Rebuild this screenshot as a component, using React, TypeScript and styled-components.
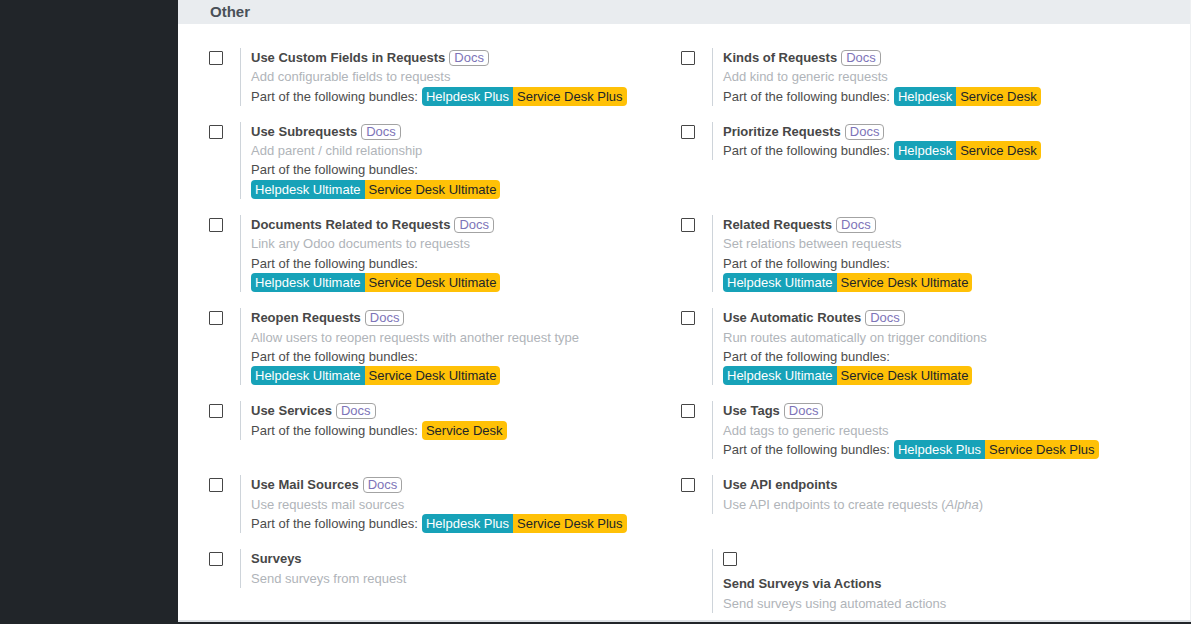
import React from "react";
import styled, { createGlobalStyle } from "styled-components";

const GlobalStyle = createGlobalStyle`
  html, body { margin: 0; padding: 0; }
  body {
    font-family: "Liberation Sans", Arial, sans-serif;
    font-size: 13px;
    color: #4c4c4c;
    background: #212529;
    overflow: hidden;
  }
  * { box-sizing: border-box; }
`;

const Page = styled.div`
  display: flex;
  height: 624px;
  background: #212529;
`;

const Sidebar = styled.aside`
  flex: 0 0 178px;
  background: #212529;
`;

const Main = styled.main`
  flex: 1;
  align-self: flex-start;
  height: 622px;
  background: #ffffff;
  border-bottom: 2px solid #dee2e6;
  border-right: 1px solid #eef0f2;
  overflow: hidden;
`;

const SectionHeader = styled.h2`
  margin: 0;
  height: 24px;
  padding-left: 32px;
  background: #e9ecef;
  font-size: 15px;
  line-height: 24px;
  font-weight: 700;
  color: #495057;
`;

const SettingsGrid = styled.div`
  display: grid;
  grid-template-columns: 472px 472px;
  row-gap: 16px;
  padding: 24px 0 0 31px;
  align-items: start;
`;

const SettingBox = styled.div`
  display: flex;
`;

const LeftPane = styled.div`
  flex: 0 0 31px;
`;

const Checkbox = styled.span`
  display: block;
  width: 14px;
  height: 14px;
  margin-top: 3px;
  border: 1px solid #464646;
  border-radius: 1px;
  background: #fff;
`;

const CheckRow = styled.div`
  height: 22px;
`;

const RightPane = styled.div`
  flex: 1;
  border-left: 1px solid #ced4da;
  padding-left: 10px;
  line-height: 19.3px;
`;

const Title = styled.div`
  font-weight: 700;
  color: #474747;
  display: flex;
  align-items: center;
  height: 19.3px;
`;

const DocsLink = styled.span`
  display: inline-block;
  margin-left: 4px;
  padding: 0 4px;
  border: 1px solid #a3a3a3;
  border-radius: 4px;
  font-weight: 400;
  line-height: 14px;
  color: #7d74b8;
`;

const Description = styled.div`
  color: #b0b4b9;
  em { font-style: italic; }
`;

const BundleLine = styled.div<{ $below?: boolean }>`
  display: flex;
  flex-wrap: wrap;
  flex-direction: ${(p) => (p.$below ? "column" : "row")};
  align-items: flex-start;
  column-gap: 4px;
  color: #4c4c4c;
`;

const BadgeGroup = styled.span`
  display: inline-flex;
  border-radius: 4px;
  overflow: hidden;
  height: 19.3px;
`;

const Badge = styled.span<{ $tone: "info" | "warning" }>`
  display: inline-block;
  padding: 0 4px;
  line-height: 19.3px;
  background: ${(p) => (p.$tone === "info" ? "#17a2b8" : "#ffc107")};
  color: ${(p) => (p.$tone === "info" ? "#ffffff" : "#212529")};
`;

type BundleItem = { label: string; tone: "info" | "warning" };

type Setting = {
  title: string;
  docs?: boolean;
  desc?: React.ReactNode;
  bundles?: BundleItem[];
  below?: boolean;
  inlineCheck?: boolean;
};

const HP: BundleItem[] = [
  { label: "Helpdesk Plus", tone: "info" },
  { label: "Service Desk Plus", tone: "warning" },
];
const H: BundleItem[] = [
  { label: "Helpdesk", tone: "info" },
  { label: "Service Desk", tone: "warning" },
];
const HU: BundleItem[] = [
  { label: "Helpdesk Ultimate", tone: "info" },
  { label: "Service Desk Ultimate", tone: "warning" },
];

const settings: Setting[] = [
  { title: "Use Custom Fields in Requests", docs: true, desc: "Add configurable fields to requests", bundles: HP },
  { title: "Kinds of Requests", docs: true, desc: "Add kind to generic requests", bundles: H },
  { title: "Use Subrequests", docs: true, desc: "Add parent / child relationship", bundles: HU, below: true },
  { title: "Prioritize Requests", docs: true, bundles: H },
  { title: "Documents Related to Requests", docs: true, desc: "Link any Odoo documents to requests", bundles: HU, below: true },
  { title: "Related Requests", docs: true, desc: "Set relations between requests", bundles: HU, below: true },
  { title: "Reopen Requests", docs: true, desc: "Allow users to reopen requests with another request type", bundles: HU, below: true },
  { title: "Use Automatic Routes", docs: true, desc: "Run routes automatically on trigger conditions", bundles: HU, below: true },
  { title: "Use Services", docs: true, bundles: [{ label: "Service Desk", tone: "warning" }] },
  { title: "Use Tags", docs: true, desc: "Add tags to generic requests", bundles: HP },
  { title: "Use Mail Sources", docs: true, desc: "Use requests mail sources", bundles: HP },
  {
    title: "Use API endpoints",
    desc: (
      <>
        Use API endpoints to create requests (<em>Alpha</em>)
      </>
    ),
  },
  { title: "Surveys", desc: "Send surveys from request" },
  { title: "Send Surveys via Actions", desc: "Send surveys using automated actions", inlineCheck: true },
];

function SettingItem({ s }: { s: Setting }) {
  return (
    <SettingBox>
      <LeftPane>{!s.inlineCheck && <Checkbox />}</LeftPane>
      <RightPane>
        {s.inlineCheck && (
          <CheckRow>
            <Checkbox />
          </CheckRow>
        )}
        <Title>
          {s.title}
          {s.docs && <DocsLink>Docs</DocsLink>}
        </Title>
        {s.desc && <Description>{s.desc}</Description>}
        {s.bundles && (
          <BundleLine $below={s.below}>
            <span>Part of the following bundles:</span>
            <BadgeGroup>
              {s.bundles.map((b) => (
                <Badge key={b.label} $tone={b.tone}>
                  {b.label}
                </Badge>
              ))}
            </BadgeGroup>
          </BundleLine>
        )}
      </RightPane>
    </SettingBox>
  );
}

export default function App() {
  return (
    <>
      <GlobalStyle />
      <Page>
        <Sidebar />
        <Main>
          <SectionHeader>Other</SectionHeader>
          <SettingsGrid>
            {settings.map((s) => (
              <SettingItem key={s.title} s={s} />
            ))}
          </SettingsGrid>
        </Main>
      </Page>
    </>
  );
}
